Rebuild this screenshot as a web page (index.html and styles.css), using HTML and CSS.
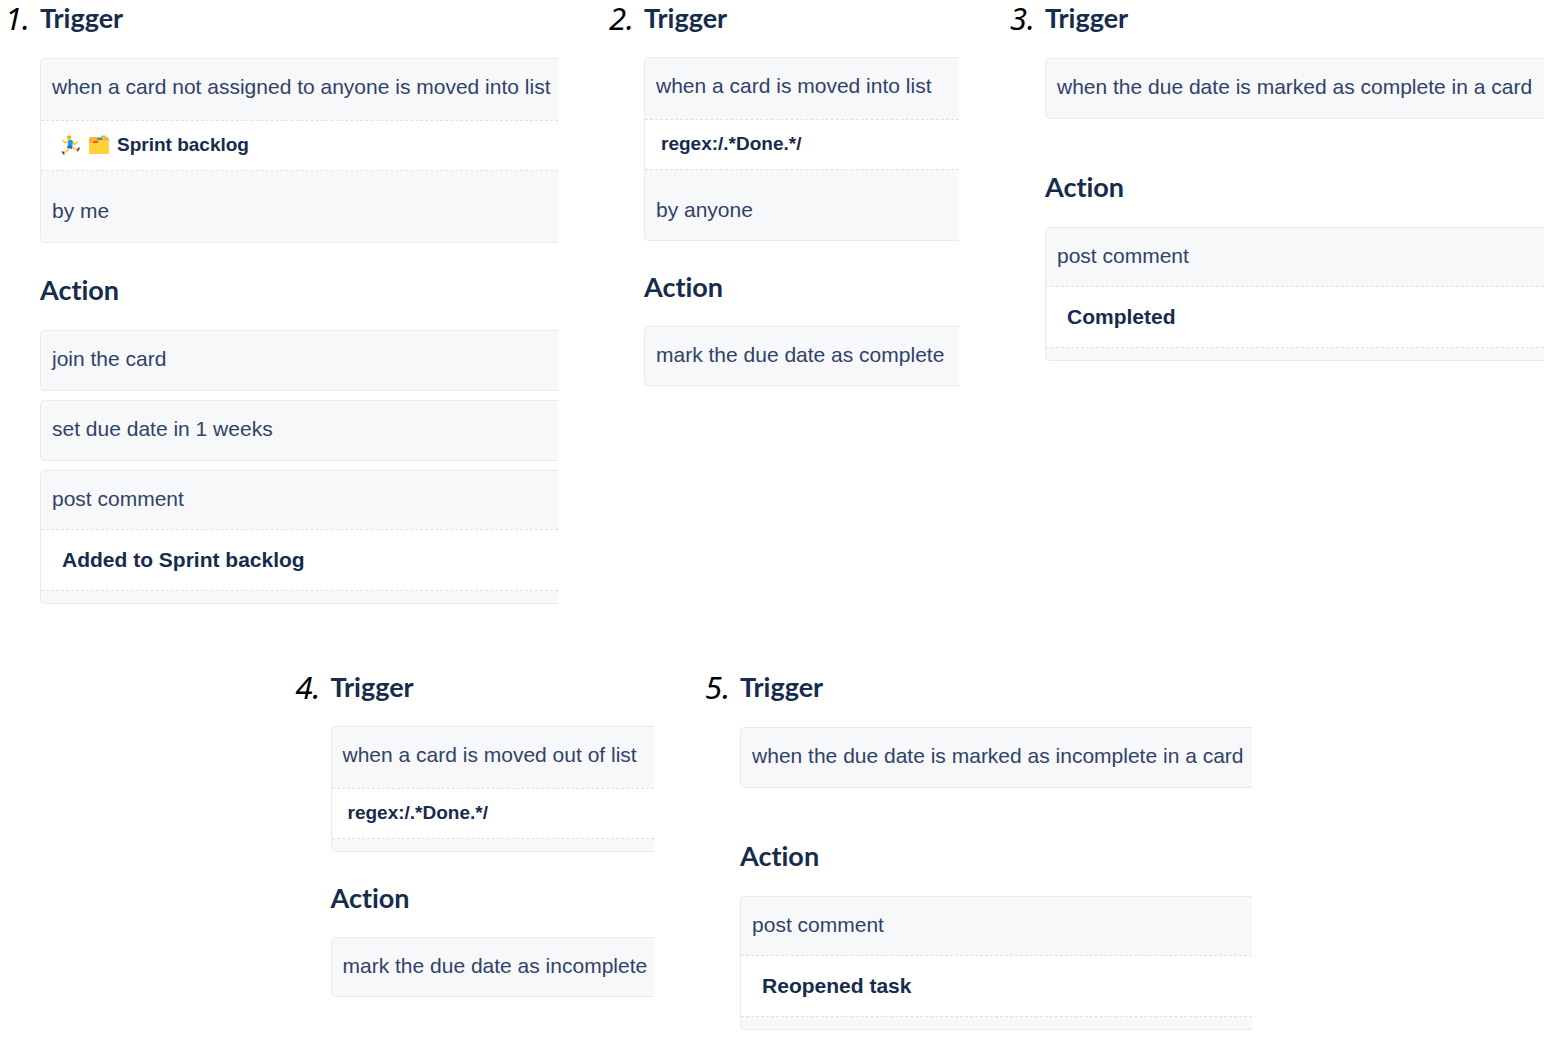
FILE: index.html
```html
<!DOCTYPE html>
<html lang="en">
<head>
<meta charset="utf-8">
<meta name="viewport" content="width=device-width, initial-scale=1">
<title>Card automation rules</title>
<link rel="stylesheet" href="styles.css">
</head>
<body>
<main class="page">
  <div class="row row-top">
    <article class="rule">
      <span class="number">1.</span>
      <div class="rule-body">
        <section>
          <h2>Trigger</h2>
          <div class="step">
            <p class="text text-list">when a card not assigned to anyone is moved into list</p>
            <p class="field field-emoji">
              <svg class="emoji" viewBox="0 0 20 20" aria-hidden="true">
                <path d="M8 6.500 4 7.800 2.200 5.500M11.500 7l2 2.500 3-2.300" fill="none" stroke="#fcc21b" stroke-width="1.500" stroke-linecap="round" stroke-linejoin="round"/>
                <path d="M10 12.500l3.500 1 3.200 1.200M7.800 12.500l-1.200 3.300-4 2" fill="none" stroke="#fcc65a" stroke-width="1.800" stroke-linecap="round" stroke-linejoin="round"/>
                <path d="M7.500 4.500l4.200.8-.2 6-1.500 2.200-3.500-1.200z" fill="#1d9be8"/>
                <path d="M6.800 10.500l4.700.8-.7 2.700-4.500-1z" fill="#2a75a8"/>
                <circle cx="8" cy="2.700" r="2.200" fill="#fcc21b"/>
                <path d="M6 2.200Q6.500 0 9 .7q1.500.5 1.200 2L8 2z" fill="#e59b20"/>
                <path d="M16.500 15.500l1.500-2.300M2.800 18.700l-1.200-1.800" stroke="#64435f" stroke-width="1.800" stroke-linecap="round"/>
              </svg>
              <svg class="emoji" viewBox="0 0 20 20" aria-hidden="true">
                <path d="M12 3V1.500Q12 .5 13 .5h2.800q1 0 1 1V4z" fill="#65d6ae"/>
                <path d="M0 5q0-3 2-3h16q2 0 2 3v12q0 2-2 2H2q-2 0-2-2z" fill="#ffb52e"/>
                <path d="M8 5V4q0-1 1-1h4v2z" fill="#2b9fae"/>
                <path d="M0 8h8q1 0 1.500-1T11 5.500h7q2 0 2 1.500v10q0 2-2 2H2q-2 0-2-2z" fill="#ffd23c"/>
                <path d="M4 8V7q0-1 1-1h4.500Q9 8 8 8z" fill="#f4511e"/>
              </svg>
              <span>Sprint backlog</span>
            </p>
            <p class="text text-actor">by me</p>
          </div>
        </section>
        <section>
          <h2>Action</h2>
          <div class="step"><p class="text">join the card</p></div>
          <div class="step"><p class="text">set due date in 1 weeks</p></div>
          <div class="step step-end">
            <p class="text text-comment">post comment</p>
            <p class="field field-comment">Added to Sprint backlog</p>
          </div>
        </section>
      </div>
    </article>

    <article class="rule">
      <span class="number">2.</span>
      <div class="rule-body compact">
        <section>
          <h2>Trigger</h2>
          <div class="step">
            <p class="text text-list">when a card is moved into list</p>
            <p class="field">regex:/.*Done.*/</p>
            <p class="text text-actor">by anyone</p>
          </div>
        </section>
        <section>
          <h2>Action</h2>
          <div class="step"><p class="text">mark the due date as complete</p></div>
        </section>
      </div>
    </article>

    <article class="rule">
      <span class="number">3.</span>
      <div class="rule-body spacious">
        <section>
          <h2>Trigger</h2>
          <div class="step"><p class="text">when the due date is marked as complete in a card</p></div>
        </section>
        <section>
          <h2>Action</h2>
          <div class="step step-end">
            <p class="text text-comment">post comment</p>
            <p class="field field-comment">Completed</p>
          </div>
        </section>
      </div>
    </article>
  </div>

  <div class="row row-bottom">
    <article class="rule">
      <span class="number">4.</span>
      <div class="rule-body compact">
        <section>
          <h2>Trigger</h2>
          <div class="step step-end">
            <p class="text text-list">when a card is moved out of list</p>
            <p class="field">regex:/.*Done.*/</p>
          </div>
        </section>
        <section>
          <h2>Action</h2>
          <div class="step"><p class="text">mark the due date as incomplete</p></div>
        </section>
      </div>
    </article>

    <article class="rule">
      <span class="number">5.</span>
      <div class="rule-body spacious">
        <section>
          <h2>Trigger</h2>
          <div class="step"><p class="text">when the due date is marked as incomplete in a card</p></div>
        </section>
        <section>
          <h2>Action</h2>
          <div class="step step-end">
            <p class="text text-comment">post comment</p>
            <p class="field field-comment">Reopened task</p>
          </div>
        </section>
      </div>
    </article>
  </div>
</main>
</body>
</html>
```
FILE: styles.css
```css
* {
  box-sizing: border-box;
}

body {
  margin: 0;
  background: #fff;
  color: #172b4d;
  font: 21px/24px "Liberation Sans", Arial, sans-serif;
}

h2,
p {
  margin: 0;
}

.page {
  display: grid;
  gap: 65px;
}

.row {
  display: grid;
  column-gap: 50px;
  align-items: start;
}

.row-top {
  grid-template-columns: 554fr 351fr 535fr;
  padding: 0 6px 0 4px;
}

.row-bottom {
  grid-template-columns: 360fr 549fr;
  margin: 0 19.2% 0 19%;
}

.rule {
  display: grid;
  grid-template-columns: 36px 1fr;
}

.number {
  padding-left: 1px;
  color: #000;
  font: italic 31px/36px "Noto Sans", sans-serif;
}

.rule-body {
  display: grid;
  gap: 29px;
}

.compact {
  gap: 28px;
}

.spacious {
  gap: 50px;
}

h2 {
  margin-bottom: 22px;
  font: bold 27px/36px Lato, sans-serif;
  font-variant-ligatures: none;
}

.compact h2 {
  margin-bottom: 21px;
}

.step {
  border: 1px solid #e8eaee;
  border-right: 0;
  border-radius: 5px 0 0 5px;
  background: #f7f8fa;
}

.step + .step {
  margin-top: 9px;
}

.step-end {
  padding-bottom: 12px;
}

.text {
  padding: 16px 0 19px 11px;
  color: #30426a;
}

.compact .text {
  padding-bottom: 18px;
}

.text-list,
.compact .text-list {
  padding-bottom: 21px;
}

.text-actor {
  padding-top: 28px;
}

.text-comment {
  padding-bottom: 18px;
}

.field {
  padding: 12px 0 13px 16px;
  border: 1px dashed #dfe1e6;
  border-width: 1px 0;
  background: #fff;
  font-size: 19px;
  font-weight: bold;
}

.field-emoji {
  display: flex;
  align-items: center;
  gap: 8px;
  padding-left: 20px;
}

.field-comment {
  padding: 18px 0 18px 21px;
  font-size: 21px;
}

.emoji {
  width: 20px;
  height: 20px;
}
```
